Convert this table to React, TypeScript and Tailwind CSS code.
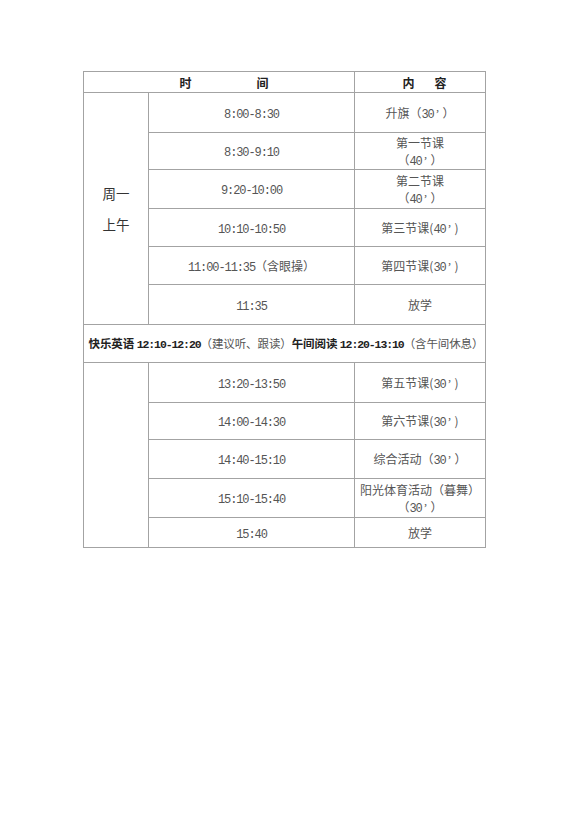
const cjk = { fontFamily: '"Noto Sans CJK SC", "Liberation Serif", serif' };

function N({ children }: { children: React.ReactNode }) {
  return (
    <span className="leading-none tracking-[-1.1px]" style={{ fontFamily: '"Liberation Mono", monospace' }}>
      {children}
    </span>
  );
}

// minute mark, set wide like the original's full-width quote
function Q() {
  return (
    <span className="inline-block w-[9px] pl-[2px] text-left leading-none" style={{ fontFamily: '"Liberation Serif", serif' }}>
      ’
    </span>
  );
}

function Two({ a, b }: { a: React.ReactNode; b: React.ReactNode }) {
  return (
    <div className="flex flex-col items-center leading-[17.5px]">
      <span>{a}</span>
      <span>{b}</span>
    </div>
  );
}

const morning = [
  { h: "h-[40px]", time: <N>8:00-8:30</N>, content: <>升旗（<N>30</N><Q />）</> },
  { h: "h-[37px]", time: <N>8:30-9:10</N>, content: <Two a="第一节课" b={<>（<N>40</N><Q />）</>} /> },
  { h: "h-[39px]", time: <N>9:20-10:00</N>, content: <Two a="第二节课" b={<>（<N>40</N><Q />）</>} /> },
  { h: "h-[38px]", time: <N>10:10-10:50</N>, content: <>第三节课(<N>40</N><Q />)</> },
  { h: "h-[38px]", time: <><N>11:00-11:35</N>（含眼操）</>, content: <>第四节课(<N>30</N><Q />)</> },
  { h: "h-[40px]", time: <N>11:35</N>, content: <>放学</> },
];

const afternoon = [
  { h: "h-[40px]", time: <N>13:20-13:50</N>, content: <>第五节课(<N>30</N><Q />)</> },
  { h: "h-[37px]", time: <N>14:00-14:30</N>, content: <>第六节课(<N>30</N><Q />)</> },
  { h: "h-[39px]", time: <N>14:40-15:10</N>, content: <>综合活动（<N>30</N><Q />）</> },
  { h: "h-[39px]", time: <N>15:10-15:40</N>, content: <Two a="阳光体育活动（暮舞）" b={<>（<N>30</N><Q />）</>} /> },
  { h: "h-[30px]", time: <N>15:40</N>, content: <>放学</> },
];

const cell = "border border-[#a3a3a3] text-center align-middle p-0";

export default function App() {
  return (
    <div className="min-h-[820px] w-[580px] bg-white pl-[83px] pt-[71px]" style={cjk}>
      <table className="w-[402px] table-fixed border-collapse text-[12px] leading-[15px] text-[#555]">
        <colgroup>
          <col className="w-[65px]" />
          <col className="w-[206px]" />
          <col className="w-[131px]" />
        </colgroup>
        <tbody>
          <tr>
            <td colSpan={2} className={`${cell} h-[21px] font-bold text-[#222]`}>
              <div className="flex justify-center gap-[65px] pl-[10px]">
                <span>时</span>
                <span>间</span>
              </div>
            </td>
            <td className={`${cell} font-bold text-[#222]`}>
              <div className="flex justify-center gap-[20px] pl-[9px]">
                <span>内</span>
                <span>容</span>
              </div>
            </td>
          </tr>
          {morning.map((r, i) => (
            <tr key={i}>
              {i === 0 && (
                <td rowSpan={6} className={`${cell} text-[13.5px] text-[#333]`}>
                  <div className="flex flex-col items-center gap-[13px] leading-[18px]">
                    <span>周一</span>
                    <span>上午</span>
                  </div>
                </td>
              )}
              <td className={`${cell} ${r.h}`}>{r.time}</td>
              <td className={cell}>{r.content}</td>
            </tr>
          ))}
          <tr>
            <td colSpan={3} className={`${cell} h-[38px] whitespace-nowrap pl-[3px] text-[11.5px] tracking-[-0.1px]`}>
              <span className="font-bold text-[#222]">
                快乐英语 <N>12:10-12:20</N>
              </span>
              （建议听、跟读）
              <span className="font-bold text-[#222]">
                午间阅读 <N>12:20-13:10</N>
              </span>
              （含午间休息）
            </td>
          </tr>
          {afternoon.map((r, i) => (
            <tr key={i}>
              {i === 0 && <td rowSpan={5} className={cell} />}
              <td className={`${cell} ${r.h}`}>{r.time}</td>
              <td className={cell}>{r.content}</td>
            </tr>
          ))}
        </tbody>
      </table>
    </div>
  );
}
